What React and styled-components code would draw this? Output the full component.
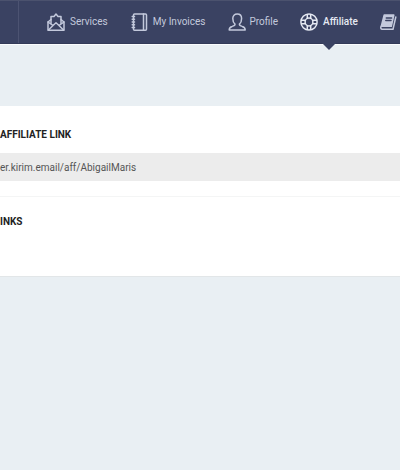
import React from "react";
import styled, { createGlobalStyle, css } from "styled-components";

const GlobalStyle = createGlobalStyle`
  * {
    box-sizing: border-box;
  }

  body {
    margin: 0;
    background: #e9eff3;
    color: #222222;
    font-family: Roboto, "Liberation Sans", sans-serif;
    font-size: 10px;
    overflow-x: hidden;
  }
`;

const Header = styled.header`
  display: flex;
  height: 44px;
  background: #3a4262;
  border-top: 1px solid #4b526e;
  border-bottom: 1px solid #333a58;
  box-shadow: 0 1px 0 #fafcfd;
`;

const Brand = styled.div`
  flex: 0 0 19px;
  border-right: 1px solid #4c5372;
`;

const Nav = styled.nav`
  display: flex;
  gap: 22px;
  padding-left: 28px;
`;

const NavLink = styled.a`
  position: relative;
  display: flex;
  flex: none;
  align-items: center;
  gap: ${(props) => (props.$tight ? "4px" : "5px")};
  color: #c3c9dc;
  font-size: 10px;
  line-height: 16px;
  text-decoration: none;

  ${(props) => props.$active && css`
    color: #e6eaf3;
    font-weight: 500;

    &:after {
      position: absolute;
      top: 100%;
      left: 50%;
      margin-left: -7px;
      border: 7px solid transparent;
      border-top-color: #3a4262;
      border-bottom: 0;
      content: "";
    }
  `}
`;

const Icon = styled.svg.attrs({ viewBox: "0 0 18 18", "aria-hidden": true })`
  flex: none;
  width: 18px;
  height: 18px;
  fill: none;
  stroke: currentColor;
  stroke-width: 1.5;
  stroke-linecap: round;
  stroke-linejoin: round;
`;

const Card = styled.main`
  margin-top: 62px;
  background: #ffffff;
  border-bottom: 1px solid #e2e6e8;
`;

const Section = styled.section`
  padding: 21px 0 15px;

  & + & {
    min-height: 80px;
    padding-top: 17px;
    border-top: 1px solid #f4f5f5;
  }
`;

const Title = styled.h2`
  margin: 0;
  color: #222222;
  font-size: 10px;
  font-weight: 700;
  line-height: 16px;
`;

const TitleLabel = styled.label`
  display: block;
`;

const LinkInput = styled.input`
  display: block;
  width: 100%;
  height: 28px;
  margin-top: 10px;
  padding: 0;
  background: #ececec;
  border: 0;
  border-radius: 0;
  color: #555555;
  font-family: inherit;
  font-size: 10px;
  outline: 0;
`;

function MailIcon() {
  return (
    <Icon>
      <path d="M4 6.5L1 9V17.2H17V9L14 6.5" />
      <path d="M4 10.5V3.5H7L9 1L11 3.5H14V10.5" />
      <path d="M1 9L6 12.5L1.5 17M17 9L12 12.5L16.5 17M6 12.5L9 9.8L12 12.5" />
    </Icon>
  );
}

function NotebookIcon() {
  return (
    <Icon>
      <rect x="3.5" y="1" width="13" height="16.2" rx="1" />
      <path d="M13.5 1V17M2.2 3.5H4.5M2.2 6.3H4.5M2.2 9H4.5M2.2 11.8H4.5M2.2 14.5H4.5" />
    </Icon>
  );
}

function ProfileIcon() {
  return (
    <Icon>
      <path d="M7 11.2C5.5 10 4.8 8.2 4.8 5.5C4.8 2.6 6.5 1 9.2 1S13.6 2.6 13.6 5.5C13.6 8.2 12.9 10 11.4 11.2C11.4 12.5 12.2 12.8 14.2 13.4C16.5 14 17.2 14.8 17.2 17H1.2C1.2 14.8 1.9 14 4.2 13.4C6.2 12.8 7 12.5 7 11.2Z" />
    </Icon>
  );
}

function AffiliateIcon() {
  return (
    <Icon>
      <circle cx="9" cy="9" r="8.1" />
      <circle cx="9" cy="9" r="3.9" />
      <path d="M7.3 1.5V5.1M10.7 1.5V5.1M7.3 12.9V16.5M10.7 12.9V16.5M1.5 7.3H5.1M1.5 10.7H5.1M12.9 7.3H16.5M12.9 10.7H16.5" />
    </Icon>
  );
}

function BookIcon() {
  return (
    <Icon>
      <path d="M4.2 2H13.8L11.3 13.3H1.3Z" fill="currentColor" />
      <path d="M15.8 4L13 16.3H2.2C0.8 16.3 0.3 14.6 1.3 13.3" />
      <path d="M6.3 5H11.6M5.8 7.4H11" stroke="#3a4262" />
    </Icon>
  );
}

export default function App() {
  return (
    <>
      <GlobalStyle />
      <Header>
        <Brand />
        <Nav>
          <NavLink href="#"><MailIcon />Services</NavLink>
          <NavLink href="#"><NotebookIcon />My Invoices</NavLink>
          <NavLink href="#" $tight><ProfileIcon />Profile</NavLink>
          <NavLink href="#" $active aria-current="page"><AffiliateIcon />Affiliate</NavLink>
          <NavLink href="#" aria-label="Book"><BookIcon /></NavLink>
        </Nav>
      </Header>
      <Card>
        <Section>
          <Title>
            <TitleLabel htmlFor="affiliate-link">AFFILIATE LINK</TitleLabel>
          </Title>
          <LinkInput
            id="affiliate-link"
            type="text"
            defaultValue="er.kirim.email/aff/AbigailMaris"
            readOnly
          />
        </Section>
        <Section>
          <Title>INKS</Title>
        </Section>
      </Card>
    </>
  );
}
